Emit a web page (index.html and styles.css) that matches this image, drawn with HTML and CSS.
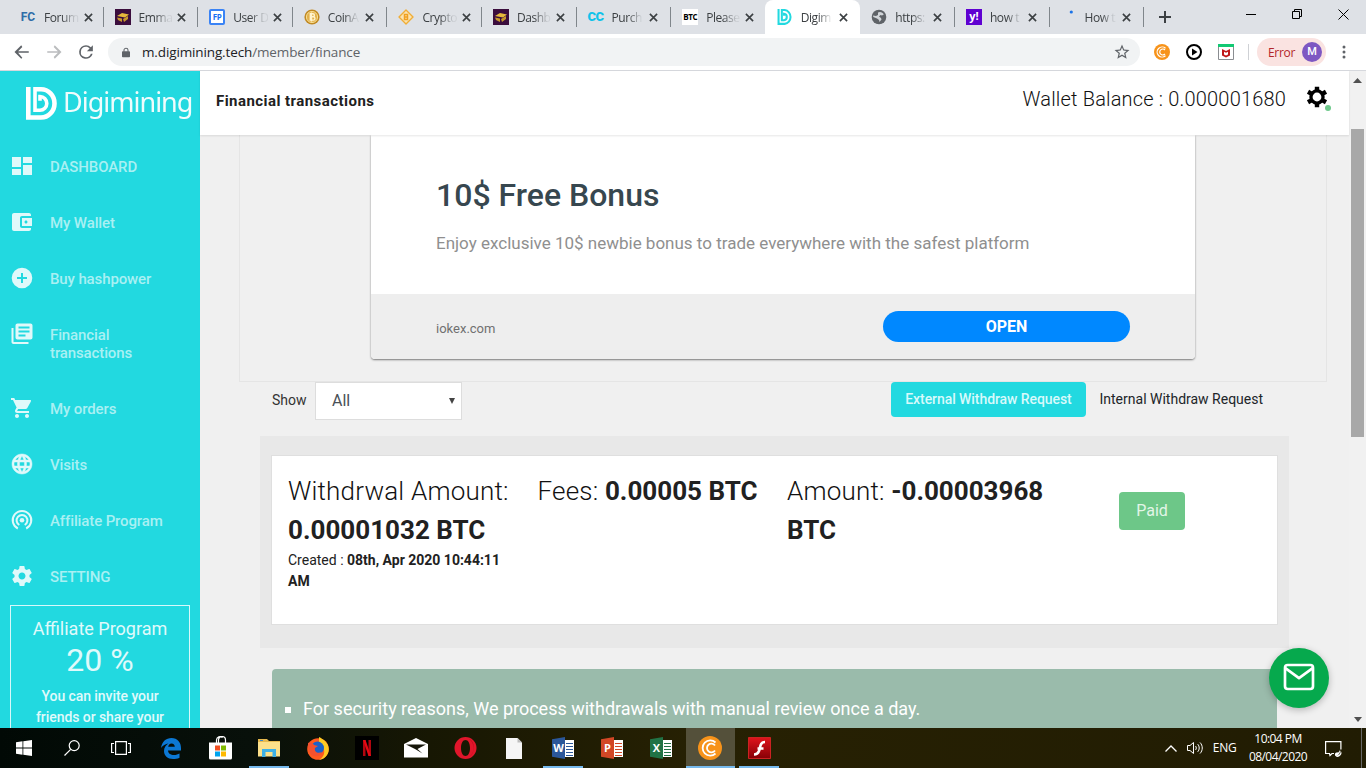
FILE: index.html
```
<!DOCTYPE html>
<html lang="en">
<head>
<meta charset="utf-8">
<title>Digimining</title>
<link rel="stylesheet" href="styles.css">
</head>
<body>
<div class="screen">
  <div class="tabstrip">
    <div class="tab"><span class="fav fav-fc">FC</span><span class="tab-title">Forum</span><svg class="close" viewBox="0 0 10 10"><path d="M1 1l8 8M9 1l-8 8"/></svg></div>
    <div class="tab"><svg class="fav" viewBox="0 0 16 16"><path fill="#3b0d3d" d="M0 0h16v16H0z"/><path fill="#e6b93c" d="M2 7l5-3 7 1.500-4 3z"/><path fill="#c8982c" d="M2 8.500l5 1v3.500l-4-2zM8 10l5-3v3l-4 3z"/></svg><span class="tab-title">Emma</span><svg class="close" viewBox="0 0 10 10"><path d="M1 1l8 8M9 1l-8 8"/></svg></div>
    <div class="tab"><span class="fav fav-fp">FP</span><span class="tab-title">User D</span><svg class="close" viewBox="0 0 10 10"><path d="M1 1l8 8M9 1l-8 8"/></svg></div>
    <div class="tab"><svg class="fav" viewBox="0 0 16 16"><circle cx="8" cy="8" r="7.600" fill="#c18a24"/><circle cx="8" cy="8" r="5.600" fill="#e2b04a" stroke="#f6dc91"/><path fill="none" stroke="#fff3cf" stroke-width="1.400" d="M6.300 4.800h2.600a1.500 1.500 0 010 3H6.300h3a1.600 1.600 0 010 3.300h-3zM7.500 3.500v9"/></svg><span class="tab-title">CoinA</span><svg class="close" viewBox="0 0 10 10"><path d="M1 1l8 8M9 1l-8 8"/></svg></div>
    <div class="tab"><svg class="fav" viewBox="0 0 16 16"><path fill="#fbe3b0" stroke="#f0ad36" stroke-width="1.400" stroke-linejoin="round" d="M8 1l7 7-7 7-7-7z"/><path fill="none" stroke="#f0a020" stroke-width="1.500" d="M6.500 5.500h3v5h-3zM6.500 8h3"/></svg><span class="tab-title">Crypto</span><svg class="close" viewBox="0 0 10 10"><path d="M1 1l8 8M9 1l-8 8"/></svg></div>
    <div class="tab"><svg class="fav" viewBox="0 0 16 16"><path fill="#3b0d3d" d="M0 0h16v16H0z"/><path fill="#e6b93c" d="M2 7l5-3 7 1.500-4 3z"/><path fill="#c8982c" d="M2 8.500l5 1v3.500l-4-2zM8 10l5-3v3l-4 3z"/></svg><span class="tab-title">Dashb</span><svg class="close" viewBox="0 0 10 10"><path d="M1 1l8 8M9 1l-8 8"/></svg></div>
    <div class="tab"><span class="fav fav-cc">CC</span><span class="tab-title">Purch</span><svg class="close" viewBox="0 0 10 10"><path d="M1 1l8 8M9 1l-8 8"/></svg></div>
    <div class="tab no-sep"><span class="fav fav-btc">BTC</span><span class="tab-title">Please</span><svg class="close" viewBox="0 0 10 10"><path d="M1 1l8 8M9 1l-8 8"/></svg></div>
    <div class="tab active no-sep"><svg class="fav" viewBox="0 0 31 33"><path fill="none" stroke="#22d9e0" stroke-width="4.200" d="M2.200 0v30.700H15a13 14.300 0 000-28.500H9V23h4.500a6.500 6.700 0 000-13.300v4"/></svg><span class="tab-title">Digim</span><svg class="close" viewBox="0 0 10 10"><path d="M1 1l8 8M9 1l-8 8"/></svg></div>
    <div class="tab"><svg class="fav" viewBox="0 0 16 16"><circle cx="8" cy="8" r="7.300" fill="#5f6368"/><path fill="#dee1e6" d="M7 3.500c2-1.500 5 0 5.800 2L11 6.500 9.500 6 8 7.500l2 1.500.5 1.500L8.500 13 8 11 6 9.500 2.300 8 2 6.500 5 7l2-1z" opacity=".9"/></svg><span class="tab-title">https:</span><svg class="close" viewBox="0 0 10 10"><path d="M1 1l8 8M9 1l-8 8"/></svg></div>
    <div class="tab"><span class="fav fav-y">y!</span><span class="tab-title">how t</span><svg class="close" viewBox="0 0 10 10"><path d="M1 1l8 8M9 1l-8 8"/></svg></div>
    <div class="tab"><svg class="fav" viewBox="0 0 16 16"><circle cx="10.300" cy="3" r="1.600" fill="#1a73e8"/></svg><span class="tab-title">How t</span><svg class="close" viewBox="0 0 10 10"><path d="M1 1l8 8M9 1l-8 8"/></svg></div>
    <svg class="newtab" viewBox="0 0 12 12"><path d="M6 0v12M0 6h12" stroke="#3c4043" stroke-width="2"/></svg>
    <div class="wincontrols">
      <svg width="10" height="10"><path d="M0 5.500h10" stroke="#000"/></svg>
      <svg width="10" height="10" fill="none" stroke="#000"><path d="M.5 2.500h7v7h-7zM2.500 2.500v-2h7v7h-2"/></svg>
      <svg width="11" height="11" stroke="#000"><path d="M.5.5l10 10M10.500.5l-10 10"/></svg>
    </div>
  </div>

  <div class="toolbar">
    <svg class="nav-i" viewBox="0 0 24 24" fill="#5f6368"><path d="M21 11H6.830l5.590-5.590L11 3l-9 9 9 9 1.410-1.410L6.830 13H21v-2z"/></svg>
    <svg class="nav-i" viewBox="0 0 24 24" fill="#babcbe"><path d="M13 3l-1.410 2.410L17.170 11H3v2h14.170l-5.580 5.590L13 21l9-9z"/></svg>
    <svg class="nav-i" viewBox="1.500 1.500 21 21" fill="#5f6368"><path d="M17.650 6.350A7.960 7.960 0 0012 4a8 8 0 107.730 10h-2.080A6 6 0 1112 6c1.660 0 3.140.69 4.220 1.780L13 11h7V4l-2.350 2.350z" /></svg>
    <div class="omnibox">
      <svg class="lock" viewBox="0 0 10 12"><path fill="#5f6368" d="M1 4.500h8a1 1 0 011 1V11a1 1 0 01-1 1H1a1 1 0 01-1-1V5.500a1 1 0 011-1z"/><path fill="none" stroke="#5f6368" stroke-width="1.300" d="M2.500 5V3a2.500 2.300 0 015 0v2"/></svg>
      <span class="url"><b>m.digimining.tech</b>/member/finance</span>
      <svg class="star" viewBox="0 0 24 24"><path fill="#5f6368" d="M22 9.240l-7.190-.62L12 2 9.190 8.630 2 9.240l5.460 4.730L5.820 21 12 17.270 18.180 21l-1.630-7.030L22 9.240zM12 15.400l-3.760 2.270 1-4.280-3.320-2.880 4.380-.38L12 6.100l1.710 4.040 4.380.38-3.320 2.880 1 4.280L12 15.400z"/></svg>
    </div>
    <div class="exts">
      <svg viewBox="0 0 16 16"><circle cx="8" cy="8" r="8" fill="#f7931a"/><path fill="none" stroke="#fff" stroke-width="1.200" d="M11.500 4.300A5 5 0 1011.500 11.700M11 6A3 3 0 1011 10"/></svg>
      <svg viewBox="0 0 16 16"><circle cx="8" cy="8" r="7" fill="#fff" stroke="#000" stroke-width="2"/><path d="M6 4.500l5.500 3.500L6 11.500z"/></svg>
      <svg viewBox="0 0 16 16"><path fill="#fff" stroke="#8a8d91" d="M.5.5h15v15H.5z"/><path fill="#12c973" d="M0 0h16v3H0z"/><path fill="#c01818" d="M4 5l4 2 4-2v6.500L8 13.500l-4-2zM6 7.800v2.700l2 1 2-1V7.800l-2 1z"/></svg>
    </div>
    <div class="profile"><span>Error</span><i>M</i></div>
    <svg class="dots" width="4" height="14"><circle cx="2" cy="2" r="1.500"/><circle cx="2" cy="7" r="1.500"/><circle cx="2" cy="12" r="1.500"/></svg>
  </div>

  <div class="page">
    <aside class="sidebar">
      <div class="brand">
        <svg viewBox="0 0 31 33"><path fill="none" stroke="#fff" stroke-width="4.600" d="M2.300 0v30.500H15a13.500 14.100 0 000-28.200H9"/><path fill="none" stroke="#fff" stroke-width="3.600" d="M9 0V23.300h5a6.800 6.900 0 000-13.800v4.300"/></svg>
        <span>Digimining</span>
      </div>
      <nav>
        <a class="item"><svg viewBox="0 0 24 24"><path d="M2 3h9v10H2zm0 12h9v6H2zm11-4h9v10h-9zm0-8h9v6h-9z"/></svg><span>DASHBOARD</span></a>
        <a class="item"><svg viewBox="0 0 24 24"><path d="M21 18v1c0 1.100-.9 2-2 2H4c-1.100 0-2-.9-2-2V5c0-1.100.9-2 2-2h15c1.100 0 2 .9 2 2v1h-9c-1.110 0-2 .9-2 2v8c0 1.100.89 2 2 2h9zm-9-2h10V8H12v8zm4-2.500c-.83 0-1.500-.67-1.500-1.500s.67-1.500 1.500-1.500 1.500.67 1.500 1.500-.67 1.500-1.500 1.500z"/></svg><span>My Wallet</span></a>
        <a class="item"><svg viewBox="0 0 24 24"><path d="M12 1.700a10.300 10.300 0 100 20.600 10.300 10.300 0 000-20.600zM17 13h-4v4h-2v-4H7v-2h4V7h2v4h4v2z"/></svg><span>Buy hashpower</span></a>
        <a class="item"><svg viewBox="0 0 24 24"><path d="M3.500 6h-2v14c0 1.100.9 2 2 2h15v-2h-15V6zm17-4.500h-13c-1.100 0-2 .9-2 2v12c0 1.100.9 2 2 2h13c1.100 0 2-.9 2-2v-12c0-1.100-.9-2-2-2zM19.500 10.500h-11v-2h11v2zm-4 4h-7v-2h7v2zm4-8h-11v-2h11v2z"/></svg><span>Financial<br>transactions</span></a>
        <a class="item"><svg viewBox="0 0 24 24"><path d="M7 18c-1.100 0-1.990.9-1.990 2S5.900 22 7 22s2-.9 2-2-.9-2-2-2zM1 2v2h2l3.600 7.590-1.350 2.450c-.16.280-.25.610-.25.960 0 1.100.9 2 2 2h12v-2H7.420c-.14 0-.25-.11-.25-.25l.03-.12.900-1.630h7.450c.75 0 1.410-.41 1.750-1.030l3.580-6.490A1 1 0 0020 4H5.210l-.94-2H1zm16 16c-1.100 0-1.990.9-1.990 2s.89 2 1.990 2 2-.9 2-2-.9-2-2-2z"/></svg><span>My orders</span></a>
        <a class="item"><svg viewBox="0 0 24 24"><path d="M11.990 2C6.470 2 2 6.480 2 12s4.470 10 9.990 10C17.520 22 22 17.520 22 12S17.520 2 11.990 2zm6.930 6h-2.950a15.650 15.650 0 00-1.380-3.560A8.030 8.030 0 0118.920 8zM12 4.040c.83 1.200 1.480 2.530 1.910 3.960h-3.820c.43-1.430 1.080-2.760 1.910-3.960zM4.260 14C4.100 13.360 4 12.690 4 12s.1-1.360.26-2h3.380c-.08.660-.14 1.320-.14 2s.06 1.340.14 2H4.260zm.82 2h2.950c.32 1.250.78 2.450 1.380 3.560A7.990 7.990 0 015.080 16zm2.950-8H5.080a7.990 7.990 0 014.330-3.560A15.650 15.650 0 008.030 8zM12 19.960c-.83-1.200-1.480-2.530-1.910-3.960h3.820c-.43 1.430-1.080 2.760-1.910 3.960zM14.340 14H9.660c-.09-.66-.16-1.320-.16-2s.07-1.350.16-2h4.680c.09.650.16 1.320.16 2s-.07 1.340-.16 2zm.25 5.560c.6-1.110 1.060-2.310 1.380-3.560h2.950a8.030 8.030 0 01-4.330 3.560zM16.360 14c.08-.66.14-1.320.14-2s-.06-1.340-.14-2h3.380c.16.640.26 1.310.26 2s-.1 1.360-.26 2h-3.380z" stroke="#e0f9fa" stroke-width=".5"/></svg><span>Visits</span></a>
        <a class="item"><svg viewBox="0 0 24 24" ><g fill="none" stroke="#e0f9fa" stroke-width="2"><path d="M7.800 20.500a9.300 9.300 0 118.400 0M9.300 17a5.400 5.400 0 115.400 0"/></g><circle cx="12" cy="12.300" r="2.300"/></svg><span>Affiliate Program</span></a>
        <a class="item"><svg viewBox="0 0 24 24"><path d="M19.430 12.980c.04-.32.070-.64.070-.98s-.03-.66-.07-.98l2.110-1.650c.19-.15.240-.42.120-.64l-2-3.460c-.12-.22-.39-.3-.61-.22l-2.490 1c-.52-.4-1.080-.73-1.690-.98l-.38-2.650A.488.488 0 0014 2h-4c-.25 0-.46.180-.49.420l-.38 2.650c-.61.250-1.170.59-1.690.98l-2.490-1c-.23-.09-.49 0-.61.220l-2 3.460c-.13.220-.07.490.12.640l2.110 1.650c-.04.320-.07.650-.07.980s.03.660.07.980l-2.110 1.650c-.19.150-.24.420-.12.640l2 3.460c.12.220.39.300.61.220l2.490-1c.52.400 1.080.73 1.690.98l.38 2.650c.03.240.24.420.49.420h4c.25 0 .46-.18.490-.42l.38-2.650c.61-.25 1.170-.59 1.690-.98l2.490 1c.23.090.49 0 .61-.22l2-3.460c.12-.22.070-.49-.12-.64l-2.110-1.650zM12 15.500c-1.930 0-3.500-1.570-3.500-3.500s1.570-3.500 3.500-3.500 3.500 1.570 3.500 3.500-1.570 3.500-3.500 3.500z"/></svg><span>SETTING</span></a>
      </nav>
      <div class="promo">
        <div class="promo-name">Affiliate Program</div>
        <div class="promo-rate">20 %</div>
        <div class="promo-text">You can invite your<br>friends or share your</div>
      </div>
    </aside>

    <div class="content">
      <header class="header">
        <h1>Financial transactions</h1>
        <div class="balance">Wallet Balance : 0.000001680</div>
        <div class="gear">
          <svg viewBox="0 0 24 24"><g fill="none" stroke="#000"><circle cx="12" cy="12" r="6.600" stroke-width="3.600"/><path stroke-width="4.800" d="M12 .7v4M12 19.300v4M2.200 6.300l3.500 2M18.300 15.700l3.500 2M2.200 17.700l3.500-2M18.300 8.300l3.500-2"/></g></svg>
          <i class="online"></i>
        </div>
      </header>

      <main class="main">
        <section class="ad-slot">
          <div class="ad">
            <div class="ad-body">
              <h2>10$ Free Bonus</h2>
              <p>Enjoy exclusive 10$ newbie bonus to trade everywhere with the safest platform</p>
            </div>
            <div class="ad-foot"><span>iokex.com</span><a>OPEN</a></div>
          </div>
        </section>

        <div class="filters">
          <span class="show">Show</span>
          <div class="select"><span>All</span><svg width="6" height="6"><path d="M0 0h6L3 6z" fill="#444"/></svg></div>
          <a class="btn-ext">External Withdraw Request</a>
          <a class="btn-int">Internal Withdraw Request</a>
        </div>

        <section class="panel">
          <div class="card">
            <div class="col">
              <div class="big"><span>Withdrwal Amount:</span><br><b>0.00001032 BTC</b></div>
              <div class="created">Created : <b>08th, Apr 2020 10:44:11<br>AM</b></div>
            </div>
            <div class="col"><div class="big"><span>Fees: </span><b>0.00005 BTC</b></div></div>
            <div class="col col-amount"><div class="big"><span>Amount: </span><b>-0.00003968<br>BTC</b></div></div>
            <div class="paid">Paid</div>
          </div>
        </section>

        <section class="notice"><i class="bullet"></i><span>For security reasons, We process withdrawals with manual review once a day.</span></section>
      </main>
    </div>

    <div class="scrollbar">
      <svg width="9" height="5"><path d="M0 5h9L4.500 0z" fill="#505050"/></svg>
      <div class="thumb"></div>
      <svg width="8" height="5"><path d="M0 0h8L4 5z" fill="#505050"/></svg>
    </div>

    <div class="mail"><svg viewBox="0 0 24 24" fill="none" stroke="#fff" stroke-width="2" stroke-linejoin="round" stroke-linecap="round"><rect x="1.500" y="3" width="21" height="18" rx="2"/><path d="M2 5.500l10 7.300 10-7.300"/></svg></div>
  </div>

  <div class="taskbar">
    <div class="task sys"><svg width="16" height="16" viewBox="0 0 16 16" fill="#fff"><path d="M0 2.200L6.500 1.300V7.600H0zM7.300 1.200L16 0v7.600H7.300zM0 8.400h6.500v6.300L0 13.800zM7.300 8.400H16V16l-8.700-1.200z"/></svg></div>
    <div class="task sys"><svg width="16" height="16" viewBox="0 0 16 16" fill="none" stroke="#fff" stroke-width="1.200"><circle cx="10.200" cy="5.600" r="5"/><path d="M6.700 9.300L.5 15.500"/></svg></div>
    <div class="task view"><svg width="20" height="14" viewBox="0 0 20 14" fill="none" stroke="#fff" stroke-width="1.200"><path d="M4.600.6h10.800v12.800H4.600zM3 2.500H.6v9H3M17 2.500h2.400v9H17"/></svg></div>
    <div class="task"><svg width="20" height="21" viewBox="0 0 20 21"><path fill="#0c78d4" d="M0 10C1 3.500 5 0 10.500 0 16.500 0 20 4.500 20 10v2.500H7c.2 3 2.700 4.500 6 4.500 2.200 0 4-.6 5.500-1.500v4.200c-2 1-4.200 1.300-6.500 1.300C6.500 21 3 17.500 3 13c0-3.500 2-6 4.500-7.500C4.500 5.800 1.800 7.500 0 10zM7.200 8.800h6.600C13.700 6.800 12.700 5.500 10.600 5.500S7.500 7 7.200 8.800z"/></svg></div>
    <div class="task"><svg width="23" height="24" viewBox="0 0 23 24"><path fill="none" stroke="#fff" stroke-width="1.200" d="M7.500 7V4a3.500 3.500 0 016-2.300M9.500 7V4a3.500 3.500 0 017 0v3"/><path fill="#fff" d="M0 6.500h23V22a1.500 1.500 0 01-1.500 1.500h-20A1.500 1.500 0 010 22z"/><path fill="#f25022" d="M6 9.500h5v5H6z"/><path fill="#7fba00" d="M12 9.500h5v5h-5z"/><path fill="#00a4ef" d="M6 15.500h5v5H6z"/><path fill="#ffb900" d="M12 15.500h5v5h-5z"/></svg></div>
    <div class="task open"><svg width="22" height="18" viewBox="0 0 22 18"><path fill="#e6b94f" d="M0 0h9l2 2h11v4H0z"/><path fill="#fce08a" d="M0 3h22v14.500H0z"/><path fill="#3eb1e6" d="M4 10h14v8h-3.500v-5h-7v5H4z"/><path fill="#4189c7" d="M2 1h3v1H2z"/></svg></div>
    <div class="task"><svg width="22" height="23" viewBox="0 0 22 23"><circle cx="11" cy="12" r="10.800" fill="#ff5a1f"/><path fill="#ffcb24" d="M12 0c4 2 10 6 9.800 12.500-.3 6-5 10-9.800 10.300 4-2 6-6 5-10s-4-5-5-8z"/><circle cx="10.500" cy="11" r="6.500" fill="#1b61c9"/><path fill="#f4512f" d="M1 6c3-1 5 0 6 2l4 1-3 2c-1 4 3 6 7 4-1 4-5 5-8 4C3 18 1 14 1 6z"/></svg></div>
    <div class="task"><svg width="24" height="24" viewBox="0 0 24 24"><path d="M0 0h24v24H0z"/><path fill="#b1060f" d="M8 4h2.500v16H8zM13.500 4H16v16h-2.500z"/><path fill="#e50914" d="M8 4h2.500L16 20h-2.500z"/></svg></div>
    <div class="task"><svg width="24" height="20" viewBox="0 0 24 20"><path fill="#fff" d="M0 6L12 0l12 6v13.500H0z"/><path fill="#16160a" d="M2 6.500l20 0-8.500 4.500 5 4.500L11 11z"/></svg></div>
    <div class="task"><svg width="23" height="22" viewBox="0 0 23 22"><path fill="#e0162b" fill-rule="evenodd" d="M11.500 0a11 11 0 100 22 11 11 0 000-22zM11.500 3c2.700 0 4.500 3.500 4.500 8s-1.800 8-4.500 8S7 15.500 7 11s1.800-8 4.500-8z"/><path fill="#b80a1c" d="M15 2c6 2 7 14 0 18a11 11 0 000-18z"/></svg></div>
    <div class="task"><svg width="16" height="21" viewBox="0 0 16 21"><path fill="#f5f5f5" d="M0 0h11.500L16 4.500V21H0z"/><path fill="#bdbdbd" d="M11.500 0v4.500H16z"/></svg></div>
    <div class="task open"><span class="office word"><b>W</b><i></i></span></div>
    <div class="task"><span class="office ppt"><b>P</b><i></i></span></div>
    <div class="task"><span class="office xls"><b>X</b><i></i></span></div>
    <div class="task current"><svg width="24" height="24" viewBox="0 0 24 24"><circle cx="12" cy="12" r="12" fill="#f7931a"/><path fill="none" stroke="#fff" stroke-width="1.800" d="M17.500 6.500A7.600 7.600 0 1017.500 17.500M17 9.500A4.400 4.400 0 1017 14.500"/></svg></div>
    <div class="task open"><svg width="23" height="22" viewBox="0 0 23 22"><defs><linearGradient id="fl" x2="0" y2="1"><stop stop-color="#e0141c"/><stop offset="1" stop-color="#860006"/></linearGradient></defs><path fill="url(#fl)" stroke="#c22" d="M.5.5h22v21H.5z"/><path fill="none" stroke="#fff" stroke-width="2.600" d="M17 5c-5 0-4.500 5-6 9-.8 2-2 3.500-5 3.500M9.500 11.500h6"/></svg></div>
    <div class="tray">
      <svg width="12" height="7" fill="none" stroke="#fff" stroke-width="1.300"><path d="M.5 6.500L6 1l5.500 5.500"/></svg>
      <svg class="vol" width="17" height="14" viewBox="0 0 17 14" fill="none" stroke="#fff"><path d="M.5 4.500H3l3.500-3v11l-3.500-3H.5zM8.500 5c1 1 1 3 0 4M10.700 3.200c2 2 2 5.600 0 7.600M13 1.500c3 3 3 8 0 11"/></svg>
      <span class="lang">ENG</span>
      <div class="clock">10:04 PM<br>08/04/2020</div>
      <svg class="action" width="17" height="17" viewBox="0 0 17 17" fill="none" stroke="#fff" stroke-width="1.200"><path d="M9 12.500H7l-2 2-.5-2H.6V.6h15.300v8"/><path fill="#fff" stroke="none" d="M15 8.500c-.5 3-2.500 3-3.500 3-1.500.5-2 2-1.300 3.200a3.500 3.500 0 105-5.200 3.600 3.600 0 01-3.700 5c2.500-.5 4-3 3.500-6z"/></svg>
      <i class="peek"></i>
    </div>
  </div>
</div>
</body>
</html>
```
FILE: styles.css
```
* { box-sizing: border-box; }
body { margin: 0; font-family: Roboto, "Liberation Sans", sans-serif; color: #212529; }
h1, h2, p { margin: 0; }
svg { display: block; flex: none; }
.screen { width: 1366px; height: 768px; overflow: hidden; display: flex; flex-direction: column; }

/* browser tabs */
.tabstrip { height: 34px; flex: none; background: #dee1e6; display: flex; padding-left: 8px; font: 12px "Open Sans", sans-serif; color: #3c4043; }
.tab { width: 94.600px; flex: none; padding: 0 12px; display: flex; align-items: center; position: relative; }
.tab::after { content: ""; position: absolute; right: -1px; top: 7px; width: 1px; height: 20px; background: #80868b; }
.tab.no-sep::after { display: none; }
.tab.active { width: 95.500px; margin-right: -.9px; background: #fff; border-radius: 8px 8px 0 0; }
.fav { width: 16px; height: 16px; flex: none; text-align: center; line-height: 16px; font-weight: 700; }
.fav-fc { font: 700 12px/16px Roboto, sans-serif; color: #2f6ea8; }
.fav-fp { font-size: 8px; line-height: 12px; color: #1a6ff2; background: #fff; border: 2px solid #3a83f5; border-radius: 2px; letter-spacing: -.3px; }
.fav-cc { font: 900 13px/16px Roboto, sans-serif; letter-spacing: -.5px; color: #10c3ea; }
.fav-btc { font-size: 8px; background: #fff; color: #000; letter-spacing: -.4px; }
.fav-y { font-size: 11px; line-height: 14px; background: #5f01d1; color: #fff; }
.tab-title { width: 35px; margin: 0 -4px 0 8px; white-space: nowrap; letter-spacing: -.45px; -webkit-mask-image: linear-gradient(90deg, #000 50%, rgba(0,0,0,.1) 90%); mask-image: linear-gradient(90deg, #000 50%, rgba(0,0,0,.1) 90%); }
.close { width: 9px; height: 9px; margin-left: 9px; fill: none; stroke: #3c4043; stroke-width: 1.800; }
.newtab { width: 12px; height: 12px; margin: 11px 0 0 15.500px; }
.wincontrols { margin-left: auto; display: flex; align-items: center; gap: 36px; padding: 0 17px 6px 0; }

/* address bar */
.toolbar { height: 37px; flex: none; background: #fff; border-bottom: 1px solid #d6d8dd; display: flex; align-items: center; padding-left: 13px; }
.nav-i { width: 18px; height: 18px; margin-right: 14px; }
.omnibox { width: 1032px; height: 28px; border-radius: 14px; background: #f1f3f4; display: flex; align-items: center; padding: 0 9px 0 14px; margin-left: -1px; }
.lock { width: 8px; height: 11px; }
.url { margin-left: 12px; font: 13.500px "Open Sans", sans-serif; color: #5f6368; letter-spacing: -.13px; }
.url b { font-weight: 400; color: #202124; }
.star { width: 18px; height: 18px; margin-left: auto; }
.exts { display: flex; gap: 16px; margin-left: 14px; padding-right: 14px; border-right: 1px solid #cfd1d5; }
.exts svg { width: 16px; height: 16px; }
.profile { margin-left: 8px; width: 69px; height: 28px; border-radius: 14px; background: #fae3e1; color: #b3262a; display: flex; align-items: center; justify-content: space-between; padding: 0 4px 0 11px; font: 12px "Open Sans", sans-serif; }
.profile span { letter-spacing: -.3px; }
.profile i { width: 20px; height: 20px; border-radius: 50%; background: #7e57c2; color: #fff; font: 500 11px/20px Roboto, sans-serif; text-align: center; }
.dots { margin-left: 16px; fill: #5f6368; }

.page { height: 657px; flex: none; display: flex; background: #f0f0f0; position: relative; }

/* sidebar */
.sidebar { width: 200px; flex: none; background: #22d9e0; overflow: hidden; }
.brand { height: 68px; padding: 16px 0 0 26px; display: flex; color: #fff; }
.brand svg { width: 31px; height: 33px; }
.brand span { font: 400 27px/30px "Noto Sans", sans-serif; margin-left: 6px; letter-spacing: -1px; opacity: .93; }
.item { display: flex; gap: 16px; padding: 15px 10px 17px; min-height: 56px; }
.item svg { width: 24px; height: 24px; fill: #e0f9fa; }
.item span { padding-top: 4px; font-size: 15px; line-height: 18px; font-weight: 500; color: #a9f0f3; letter-spacing: -.12px; }
.item:nth-child(4) { padding-bottom: 19px; }
.promo { margin: 0 10px; height: 200px; border: 1px solid #d7f8fa; padding: 11px 11px 0; text-align: center; color: #e0fafb; }
.promo-name { font-size: 18px; line-height: 23px; }
.promo-rate { font-size: 32px; line-height: 38px; margin-top: 1px; }
.promo-text { font-size: 14px; line-height: 21px; margin-top: 7px; font-weight: 500; letter-spacing: -.07px; }

/* content */
.content { width: 1149px; flex: none; display: flex; flex-direction: column; }
.header { height: 64px; flex: none; background: #fff; display: flex; align-items: center; padding: 0 21px 0 16px; box-shadow: 0 1px 2px rgba(0,0,0,.1); position: relative; }
.header h1 { font-size: 15px; font-weight: 700; line-height: 20px; margin-top: -4px; color: #212121; letter-spacing: .45px; }
.balance { margin: -8px 0 0 auto; font-size: 20px; line-height: 24px; font-weight: 300; color: #111; letter-spacing: .18px; }
.gear { position: relative; width: 22px; height: 24px; margin: -10px 0 0 20px; }
.gear svg { width: 22px; height: 22px; }
.online { position: absolute; left: 19px; top: 19px; width: 6px; height: 6px; border-radius: 50%; background: #6ec88b; }
.main { padding: 0 22px 0 39px; height: 593px; overflow: hidden; }
.ad-slot { height: 247px; border: 1px solid #e5e5e5; border-top: 0; display: flex; justify-content: center; align-items: flex-start; }
.ad { width: 824px; height: 224px; background: #fff; border-radius: 0 0 4px 4px; box-shadow: 0 1px 2px rgba(0,0,0,.5); }
.ad-body { height: 159px; padding: 40px 65px 0; }
.ad h2 { font-size: 32px; line-height: 40px; font-weight: 500; color: #37474f; }
.ad p { font-size: 17px; line-height: 24px; margin-top: 16px; color: #8f8f8f; white-space: nowrap; }
.ad-foot { height: 65px; background: #eee; border-radius: 0 0 4px 4px; display: flex; justify-content: space-between; align-items: center; padding: 0 65px; font-size: 13px; color: #707070; }
.ad-foot span { padding-top: 3px; }
.ad-foot a { width: 247px; height: 31px; line-height: 31px; border-radius: 16px; background: #08f; color: #fff; text-align: center; font-size: 16px; font-weight: 700; }
.filters { height: 54px; display: flex; padding-left: 33px; font-size: 14px; color: #333; }
.show { width: 43px; line-height: 36px; }
.select { width: 147px; height: 38px; border: 1px solid #ddd; background: #fff; display: flex; justify-content: space-between; align-items: center; padding: 0 6px 1px 16px; font-size: 16px; color: #495057; }
.btn-ext { margin-left: 429px; width: 195px; height: 35px; line-height: 35px; text-align: center; border-radius: 4px; background: #22d9e0; color: #d8fafb; font-weight: 500; letter-spacing: -.07px; }
.btn-int { margin-left: 13.500px; line-height: 35px; color: #212529; white-space: nowrap; }
.panel { margin-left: 21px; width: 1029px; height: 212px; background: #e8e8e8; padding: 19px 11px 23px; }
.card { width: 1007px; height: 170px; background: #fff; border: 1px solid #dfdfdf; padding: 16px 16px 0; display: flex; }
.col { width: 249.500px; flex: none; white-space: nowrap; color: #212121; }
.col-amount { width: 332px; }
.big { font-size: 26px; line-height: 39px; font-weight: 300; }
.big span { letter-spacing: .2px; color: #111; }
.big b { font-weight: 700; }
.created { font-size: 14px; line-height: 21px; }
.created b { font-weight: 700; }
.paid { margin-top: 20px; width: 66px; height: 38px; line-height: 38px; border-radius: 4px; background: #6dc788; color: #e2f5e7; font-size: 16px; text-align: center; }
.notice { margin: 21px 0 0 33px; width: 1005px; height: 120px; border-radius: 4px; background: #9abbab; color: #fff; display: flex; padding: 28px 0 0 13px; font-size: 18px; line-height: 24px; white-space: nowrap; }
.bullet { width: 6px; height: 6px; background: #fff; margin: 10px 12px 0 0; }

.scrollbar { width: 17px; background: #f1f1f1; display: flex; flex-direction: column; align-items: center; padding: 7px 0 6px; }
.thumb { width: 13px; height: 308px; margin: 46px 0 auto; background: #a8a8a8; }
.mail { position: absolute; left: 1269px; top: 577px; width: 60px; height: 60px; border-radius: 50%; background: #06a94d; box-shadow: 0 2px 7px rgba(0,0,0,.25); display: flex; align-items: center; justify-content: center; }
.mail svg { width: 32px; height: 32px; margin-top: -3px; }

/* taskbar */
.taskbar { height: 40px; flex: none; display: flex; background: linear-gradient(90deg, #010905 0, #08100a 250px, #171703 430px, #272103 700px, #211c03 100%); color: #fff; }
.task { width: 49px; flex: none; display: flex; align-items: center; justify-content: center; position: relative; }
.task.sys { width: 48px; }
.task.view { width: 49px; }
.task.view + .task { margin-left: 1.500px; }
.open::after, .current::after { content: ""; position: absolute; left: 4px; right: 5px; bottom: 0; height: 2px; background: #76b9ed; }
.current { background: #54503a; }
.current::after { left: 0; right: 0; }
.office { display: flex; align-items: center; width: 22px; height: 22px; }
.office b { width: 13px; height: 22px; font: 700 11px/22px "Open Sans", sans-serif; text-align: center; background: var(--c); clip-path: polygon(0 10%, 100% 0, 100% 100%, 0 90%); }
.office i { width: 9px; height: 17px; border: 1px solid #fff; background: repeating-linear-gradient(#fff 0 2px, var(--c) 2px 3px); }
.word { --c: #2b579a; }
.ppt { --c: #d24726; }
.xls { --c: #217346; }
.tray { margin-left: auto; display: flex; align-items: center; font: 12px/18px "Open Sans", sans-serif; }
.vol { margin-left: 10px; }
.lang { margin-left: 9px; letter-spacing: -.2px; }
.clock { width: 60px; margin: 0 0 0 11.500px; text-align: center; letter-spacing: -.55px; }
.action { margin-left: 17px; margin-top: 2px; }
.peek { width: 1px; height: 40px; background: #666; margin: 0 4px 0 19px; }
```
